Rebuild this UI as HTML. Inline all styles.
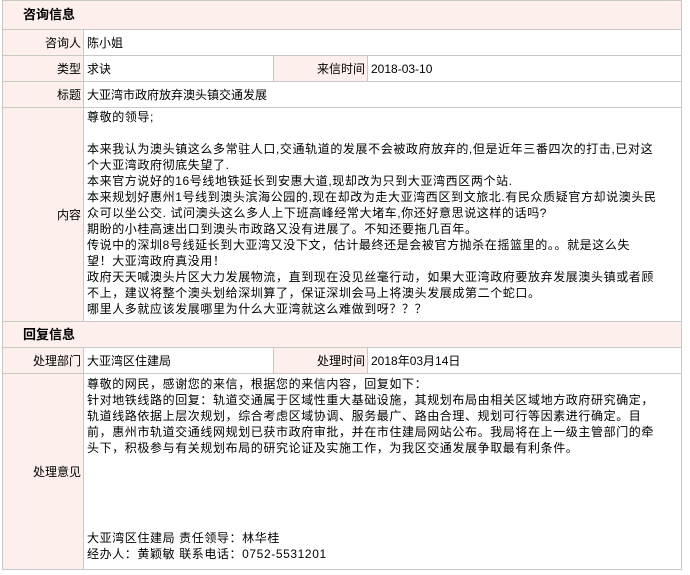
<!DOCTYPE html>
<html><head><meta charset="utf-8">
<style>
html,body{margin:0;padding:0;background:#fff;}
body{width:690px;height:575px;overflow:hidden;font-family:"Liberation Sans","Noto Sans CJK SC",sans-serif;font-size:12px;color:#000;}
table{position:absolute;left:2px;top:0;border-collapse:collapse;table-layout:fixed;width:679px;}
td{border:1px solid #c8c8c8;padding:0 3px;line-height:16px;white-space:nowrap;vertical-align:middle;overflow:hidden;}
.c{letter-spacing:0.6px;}
.l{background:#fdf0ec;text-align:right;padding:0 2px 0 0;}
.h{background:#fdf0ec;font-weight:bold;font-size:13px;padding-left:20px;}
</style></head><body>
<table>
<colgroup><col style="width:81px"><col style="width:190px"><col style="width:94px"><col style="width:314px"></colgroup>
<tr style="height:29px"><td colspan="4" class="h">咨询信息</td></tr>
<tr style="height:26px"><td class="l">咨询人</td><td colspan="3">陈小姐</td></tr>
<tr style="height:26px"><td class="l">类型</td><td>求诀</td><td class="l">来信时间</td><td>2018-03-10</td></tr>
<tr style="height:26px"><td class="l">标题</td><td colspan="3">大亚湾市政府放弃澳头镇交通发展</td></tr>
<tr style="height:214px"><td class="l">内容</td><td colspan="3" class="c" style="vertical-align:top;padding-top:1px">尊敬的领导;<br><br>本来我认为澳头镇这么多常驻人口,交通轨道的发展不会被政府放弃的,但是近年三番四次的打击,已对这<br>个大亚湾政府彻底失望了.<br>本来官方说好的16号线地铁延长到安惠大道,现却改为只到大亚湾西区两个站.<br>本来规划好惠州1号线到澳头滨海公园的,现在却改为走大亚湾西区到文旅北.有民众质疑官方却说澳头民<br>众可以坐公交. 试问澳头这么多人上下班高峰经常大堵车,你还好意思说这样的话吗?<br>期盼的小桂高速出口到澳头市政路又没有进展了。不知还要拖几百年。<br>传说中的深圳8号线延长到大亚湾又没下文，估计最终还是会被官方抛杀在摇篮里的。。就是这么失<br>望！大亚湾政府真没用！<br>政府天天喊澳头片区大力发展物流，直到现在没见丝毫行动，如果大亚湾政府要放弃发展澳头镇或者顾<br>不上，建议将整个澳头划给深圳算了，保证深圳会马上将澳头发展成第二个蛇口。<br>哪里人多就应该发展哪里为什么大亚湾就这么难做到呀？？？</td></tr>
<tr style="height:26px"><td colspan="4" class="h">回复信息</td></tr>
<tr style="height:26px"><td class="l">处理部门</td><td>大亚湾区住建局</td><td class="l">处理时间</td><td>2018年03月14日</td></tr>
<tr style="height:196px"><td class="l">处理意见</td><td colspan="3" class="c" style="vertical-align:top;padding-top:2px">尊敬的网民，感谢您的来信，根据您的来信内容，回复如下：<br>针对地铁线路的回复：轨道交通属于区域性重大基础设施，其规划布局由相关区域地方政府研究确定，<br>轨道线路依据上层次规划，综合考虑区域协调、服务最广、路由合理、规划可行等因素进行确定。目<br>前，惠州市轨道交通线网规划已获市政府审批，并在市住建局网站公布。我局将在上一级主管部门的牵<br>头下，积极参与有关规划布局的研究论证及实施工作，为我区交通发展争取最有利条件。<div style="height:74px"></div>大亚湾区住建局 责任领导：林华桂<br>经办人：黄颖敏 联系电话：0752-5531201</td></tr>
</table>
</body></html>
